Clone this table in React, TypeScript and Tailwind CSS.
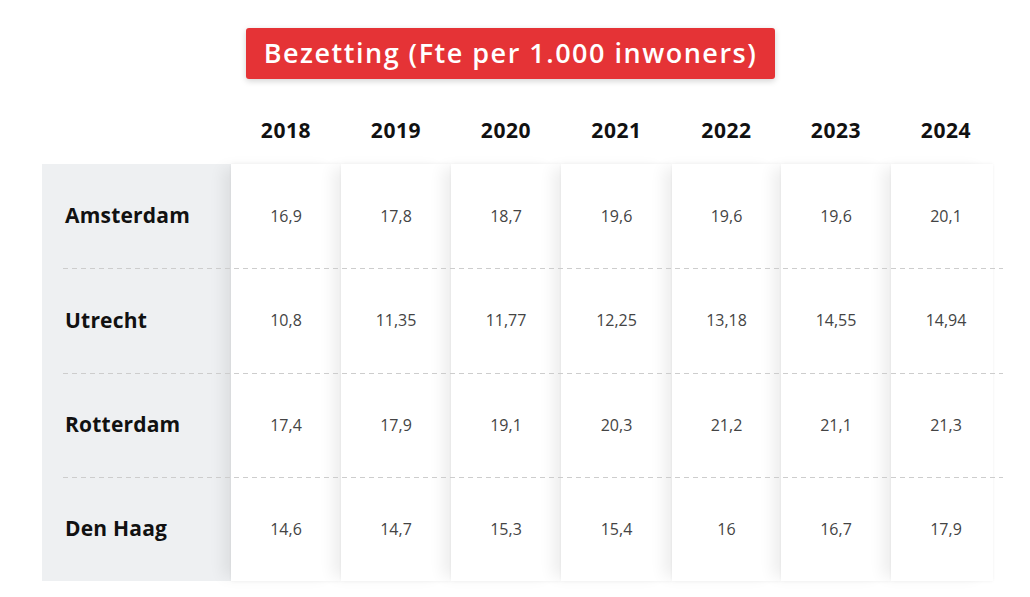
import React from "react";

const years = ["2018", "2019", "2020", "2021", "2022", "2023", "2024"];
const rows: { name: string; values: string[] }[] = [
  { name: "Amsterdam", values: ["16,9", "17,8", "18,7", "19,6", "19,6", "19,6", "20,1"] },
  { name: "Utrecht", values: ["10,8", "11,35", "11,77", "12,25", "13,18", "14,55", "14,94"] },
  { name: "Rotterdam", values: ["17,4", "17,9", "19,1", "20,3", "21,2", "21,1", "21,3"] },
  { name: "Den Haag", values: ["14,6", "14,7", "15,3", "15,4", "16", "16,7", "17,9"] },
];

const colW = ["w-[110px]", "w-[110px]", "w-[110px]", "w-[111px]", "w-[109px]", "w-[110px]", "w-[102px] pl-[8px]"];

export default function App() {
  return (
    <div className="w-[1030px] h-[597px] bg-white overflow-hidden font-['Open_Sans',sans-serif]">
      <div className="pt-[28px] pl-[246px]">
        <div className="w-[529px] h-[51px] bg-[#e53336] rounded-[3px] shadow-[0_2px_6px_rgba(0,0,0,0.18)] flex items-center justify-center text-white text-[27px] font-semibold tracking-[1.5px]">
          Bezetting (Fte per 1.000 inwoners)
        </div>
      </div>

      <div className="ml-[42px] mt-[37px] flex h-[28px] items-center">
        <div className="w-[189px]" />
        {years.map((y, i) => (
          <div key={y} className={`${colW[i]} text-center text-[21px] font-bold text-[#111] leading-none tracking-[0.6px]`}>
            {y}
          </div>
        ))}
      </div>

      <div className="relative ml-[42px] mt-[20px] flex h-[417px] w-[960px]">
        <div className="w-[189px] bg-[#eef0f2] flex flex-col">
          {rows.map((r) => (
            <div key={r.name} className="flex-1 flex items-center pl-[23px] text-[21px] font-bold text-[#111] tracking-[0.2px]">
              {r.name}
            </div>
          ))}
        </div>
        {years.map((y, i) => (
          <div
            key={y}
            className={`${colW[i]} relative bg-white flex flex-col shadow-[-12px_0_14px_-4px_rgba(0,0,0,0.07),0_-1px_3px_rgba(0,0,0,0.03),0_1px_3px_rgba(0,0,0,0.03)]`}
          >
            {rows.map((r) => (
              <div key={r.name} className="flex-1 flex items-center justify-center text-[16px] font-medium text-[#444]">
                {r.values[i]}
              </div>
            ))}
          </div>
        ))}
        {[104, 209, 313].map((t) => (
          <div
            key={t}
            className="absolute left-[21px] w-[940px] h-px bg-[linear-gradient(to_right,#cdcdcd_5px,transparent_5px)] bg-[length:9px_1px]"
            style={{ top: t }}
          />
        ))}
      </div>
    </div>
  );
}
